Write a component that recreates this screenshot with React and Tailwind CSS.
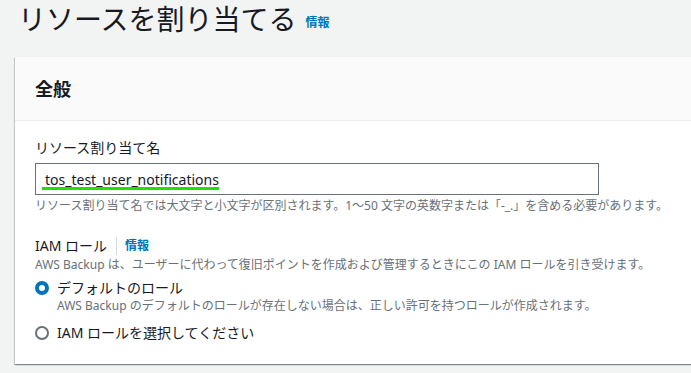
import React from 'react';

const font = { fontFamily: '"Noto Sans", "Noto Sans CJK JP", sans-serif' };

function Radio({ checked }) {
  return checked ? (
    <span className="w-[14px] h-[14px] rounded-full border-[4px] border-[#0073bb] bg-white shrink-0" />
  ) : (
    <span className="w-[14px] h-[14px] rounded-full border-[2px] border-[#687078] bg-white shrink-0" />
  );
}

export default function App() {
  return (
    <div className="w-[691px] h-[373px] overflow-hidden bg-[#f2f3f3] text-[#16191f]" style={font}>
      {/* Page title */}
      <div className="flex items-start h-[57px] pl-[18px] pt-[1px]">
        <h1 className="text-[28px] leading-[36px] font-normal text-[#16191f]">リソースを割り当てる</h1>
        <a className="ml-[9px] mt-[14px] text-[12px] leading-[16px] font-bold text-[#0073bb]">情報</a>
      </div>

      {/* Card */}
      <div className="ml-[15px] w-[720px] bg-white shadow-[0_1px_1px_0_rgba(0,28,36,0.3),1px_1px_1px_0_rgba(0,28,36,0.15),-1px_1px_1px_0_rgba(0,28,36,0.15)]">
        <div className="h-[64px] flex items-center px-[20px] bg-[#fafafa] border-b border-[#eaeded]">
          <h2 className="text-[18px] leading-[22px] font-bold">全般</h2>
        </div>

        <div className="px-[20px] pt-[17px] pb-[21px]">
          <div className="text-[14px] leading-[20px]">リソース割り当て名</div>
          <div className="relative mt-[5px] w-[564px] h-[32px] border border-[#687078] flex items-center pl-[9px] text-[14px]">
            tos_test_user_notifications
            <span className="absolute left-[6px] top-[23px] w-[177px] h-[3px] bg-[#22e000]" />
          </div>
          <div className="mt-[3px] text-[12px] leading-[16px] text-[#687078]">
            リソース割り当て名では大文字と小文字が区別されます。1～50 文字の英数字または「-_.」を含める必要があります。
          </div>

          <div className="mt-[22px] flex items-center text-[14px] leading-[20px]">
            <span>IAM ロール</span>
            <span className="ml-[9px] w-px h-[18px] bg-[#d5dbdb]" />
            <a className="ml-[8px] text-[12px] font-bold text-[#0073bb]">情報</a>
          </div>
          <div className="mt-[1px] text-[12px] leading-[16px] text-[#687078]">
            AWS Backup は、ユーザーに代わって復旧ポイントを作成および管理するときにこの IAM ロールを引き受けます。
          </div>

          <div className="mt-[5px] flex items-center gap-[8px]">
            <Radio checked />
            <span className="text-[14px] leading-[20px]">デフォルトのロール</span>
          </div>
          <div className="pl-[22px] text-[12px] leading-[16px] text-[#687078]">
            AWS Backup のデフォルトのロールが存在しない場合は、正しい許可を持つロールが作成されます。
          </div>

          <div className="mt-[9px] flex items-center gap-[8px]">
            <Radio />
            <span className="text-[14px] leading-[20px]">IAM ロールを選択してください</span>
          </div>
        </div>
      </div>
    </div>
  );
}
